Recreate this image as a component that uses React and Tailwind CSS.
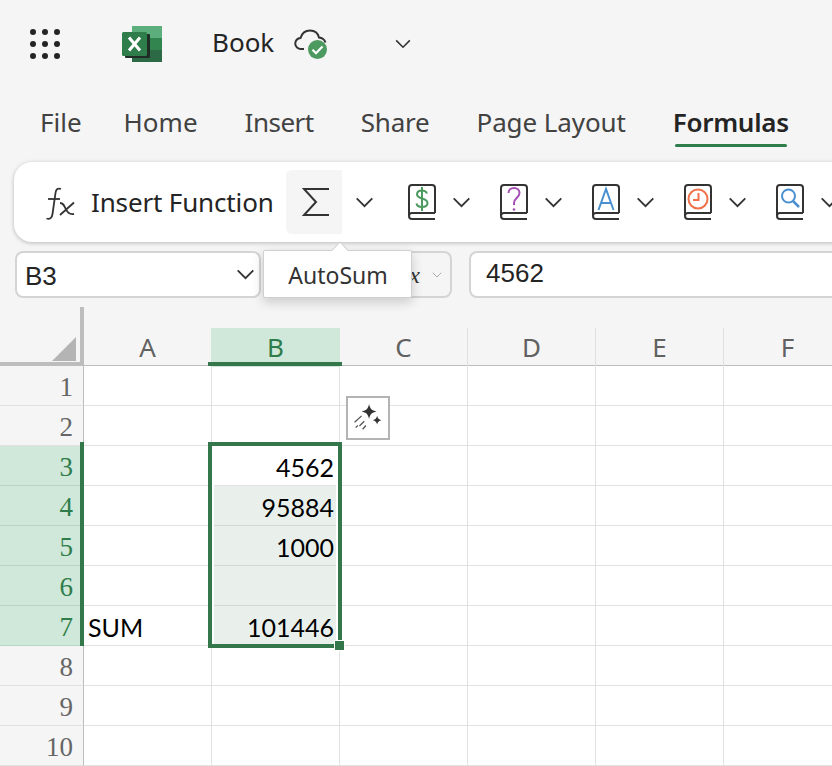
import React from "react";

const rows = [1, 2, 3, 4, 5, 6, 7, 8, 9, 10];
const cols = ["C", "D", "E", "F"];
const cells = { 3: "4562", 4: "95884", 5: "1000", 7: "101446" };

const Chevron = ({ className = "", color = "#333" }) => (
  <svg viewBox="0 0 20 12" className={className} fill="none" stroke={color} strokeWidth="2">
    <path d="M1.5 1.5 10 10l8.500-8.500" />
  </svg>
);

const AppGrid = () => (
  <svg viewBox="0 0 32 32" className="w-8 h-8 shrink-0" fill="#242424">
    {[4, 16, 28].map((y) =>
      [4, 16, 28].map((x) => <circle key={`${x}-${y}`} cx={x} cy={y} r="3" />)
    )}
  </svg>
);

const ExcelLogo = () => (
  <svg viewBox="0 0 40 36" className="w-10 h-9 shrink-0">
    <rect x="10" y="0" width="30" height="12" fill="#5cae7c" />
    <rect x="10" y="12" width="30" height="12" fill="#33854f" />
    <rect x="10" y="24" width="30" height="12" fill="#2b6a45" />
    <rect x="3" y="8" width="25" height="24" rx="1" fill="#1f2d26" />
    <rect x="0" y="6" width="25" height="24" rx="1.500" fill="#2f7d4b" />
    <path d="M7 11.500 18 24.500M18 11.500 7 24.500" stroke="#fff" strokeWidth="3" />
  </svg>
);

const CloudCheck = () => (
  <svg viewBox="0 0 34 32" className="w-[34px] h-8 shrink-0" fill="none">
    <path
      d="M10 20H7a5.500 5.500 0 0 1-.5-11C8 4 12 1.500 16 1.500c4.500 0 8 2.800 9 7 3 .3 5.500 2 6.500 5"
      stroke="#333"
      strokeWidth="2"
    />
    <circle cx="23.500" cy="20.500" r="9.500" fill="#4c9a5f" />
    <path d="m18.500 20.800 3.500 3.400 6.500-6.700" stroke="#fff" strokeWidth="2.200" />
  </svg>
);

const FxIcon = () => (
  <svg viewBox="0 0 32 34" className="w-8 h-[34px] shrink-0" fill="none" stroke="#333" strokeWidth="1.800">
    <path d="M17 2c-3-1.200-5 0-5.500 4L8.500 27c-.5 4-2.500 5.500-6 4.500" />
    <path d="M4 12h12" />
    <path d="M16 16c3 0 4 2 5.500 5.500S25 28 30 27M30 15.500 16 28" />
  </svg>
);

const Sigma = () => (
  <svg viewBox="0 0 28 30" className="w-7 h-[30px]" fill="none" stroke="#333" strokeWidth="2">
    <path d="M27 2H2l12 13L2 28h25" />
  </svg>
);

// book shaped ribbon icons share the same outline, only the glyph on the page changes
const Book = ({ children }) => (
  <svg viewBox="0 0 28 36" className="w-7 h-9 shrink-0" fill="none">
    <path
      d="M27 29H4a3 3 0 0 0-3 3M27 35H4a3 3 0 0 1-3-3V4a3 3 0 0 1 3-3h20a3 3 0 0 1 3 3v25"
      stroke="#333"
      strokeWidth="2"
    />
    {children}
  </svg>
);

const bookIcons = [
  <path
    key="d"
    d="M19 9.500C18 7 16 6.500 14 6.500c-3 0-5 1.700-5 4 0 5 10.500 3 10.500 8.500 0 2.500-2.300 4-5.500 4-2.500 0-5-1-5.500-3.500M14 3v24"
    stroke="#4c9a5f"
    strokeWidth="2"
  />,
  <g key="q">
    <path d="M8.500 9c0-3 2.500-5 5.500-5s5.500 2 5.500 5c0 4.500-5.500 5-5.500 10v2" stroke="#a64fb5" strokeWidth="2" />
    <circle cx="14" cy="25.500" r="1.300" fill="#a64fb5" />
  </g>,
  <path key="a" d="M6.500 26 14 5l7.500 21M9 19h10" stroke="#4a90d0" strokeWidth="2" />,
  <g key="c" stroke="#f0714a" strokeWidth="2">
    <circle cx="14" cy="15" r="9.500" />
    <path d="M14.500 9v7H9" />
  </g>,
  <g key="s" stroke="#4a90d0" strokeWidth="2">
    <circle cx="12.500" cy="12" r="6.500" />
    <path d="m17 17 6 6" strokeWidth="2.500" />
  </g>,
];

const Sparkle = () => (
  <svg viewBox="0 0 28 28" className="w-[30px] h-[30px]" fill="#333">
    <path d="M15 1c1 4.500 2.500 6 7 7-4.500 1-6 2.500-7 7-1-4.500-2.500-6-7-7 4.500-1 6-2.500 7-7Z" />
    <path d="M22.500 12c.6 2.500 1.500 3.400 4 4-2.500.6-3.400 1.500-4 4-.6-2.500-1.500-3.400-4-4 2.500-.6 3.400-1.500 4-4Z" />
    <path d="M8 12 1.500 18M10.500 17 6 21.500M4.500 21 2.500 23M12 21l-3 3.500" stroke="#555" strokeWidth="1.200" fill="none" />
  </svg>
);

const App = () => {
  return (
    <div className="w-[832px] h-[766px] overflow-hidden relative bg-[#f5f5f5] text-[#242424] font-['Noto_Sans',sans-serif]">
      {/* title bar */}
      <div className="h-[84px] flex items-center pl-[29px] pt-1">
        <AppGrid />
        <div className="ml-[61px]">
          <ExcelLogo />
        </div>
        <span className="ml-[50px] mt-[-4px] text-[26px]">Book</span>
        <div className="ml-[20px] mt-[2px]">
          <CloudCheck />
        </div>
        <Chevron className="ml-[67px] w-4 h-[10px]" />
      </div>

      {/* tabs */}
      <div className="h-[78px] flex gap-[47px] pl-[40px] text-[26px] text-[#424242]">
        <span className="mr-[-5px] mt-[20px] leading-9">File</span>
        <span className="mt-[20px] leading-9">Home</span>
        <span className="mt-[20px] leading-9 tracking-[-0.5px]">Insert</span>
        <span className="mt-[20px] leading-9 tracking-[-0.2px]">Share</span>
        <span className="mt-[20px] leading-9 tracking-[-0.1px]">Page Layout</span>
        <div className="mt-[20px] flex flex-col items-center">
          <span className="leading-9 font-semibold tracking-[-0.3px] text-[#242424]">Formulas</span>
          <div className="w-[112px] h-[3px] mt-[4px] rounded-full bg-[#2f7d4b]" />
        </div>
      </div>

      {/* ribbon */}
      <div className="ml-[14px] w-[900px] h-[80px] rounded-[18px] bg-white shadow-[0_1px_4px_rgba(0,0,0,0.25)] flex items-center">
        <div className="ml-[30px] mt-[3px]">
          <FxIcon />
        </div>
        <span className="ml-[15px] text-[26px] whitespace-nowrap tracking-[-0.15px]">Insert Function</span>
        <div className="ml-[12px] w-[56px] h-[64px] bg-[#f5f5f5] rounded-l-[6px] flex items-center justify-center pl-[5px]">
          <Sigma />
        </div>
        <Chevron className="ml-[13px] w-[19px] h-[11px]" />
        <div className="flex ml-[34px] gap-[64px]">
          {bookIcons.map((icon, i) => (
            <div key={i} className="flex items-center gap-[16px] w-[28px] overflow-visible">
              <Book>{icon}</Book>
              <Chevron className="w-[19px] h-[11px] shrink-0" />
            </div>
          ))}
        </div>
      </div>

      {/* name box and formula bar */}
      <div className="mt-[9px] h-[47px] flex pl-[15px]">
        <div className="w-[246px] shrink-0 bg-white border-2 border-[#d4d4d4] rounded-lg flex items-center justify-between pl-[8px] pr-[4px] text-[26px]">
          <span className="pt-[3px] font-['Liberation_Sans',sans-serif] text-[26px]">B3</span>
          <Chevron className="w-[19px] h-[11px]" />
        </div>
        <div className="ml-[4px] w-[187px] shrink-0 bg-[#f5f5f5] border-2 border-[#d4d4d4] rounded-lg flex items-center justify-end pr-[8px] gap-[12px]">
          <span className="text-[24px] italic font-['Liberation_Serif',serif] text-[#333]">x</span>
          <Chevron className="w-[10px] h-[6px]" color="#aaa" />
        </div>
        <div className="ml-[17px] w-[400px] shrink-0 bg-white border-2 border-[#d4d4d4] rounded-lg flex items-center pl-[15px] pb-[2px] text-[26px] font-['Liberation_Sans',sans-serif]">
          4562
        </div>
      </div>

      {/* sheet */}
      <div className="relative mt-[9px]">
        <div className="h-[59px] relative grid grid-cols-[84px_127px_129px_128px_128px_128px_128px] border-b border-[#bdbdbd]">
          <div className="flex items-end justify-end pr-[8px] pb-[6px]">
            <div className="w-6 h-6 bg-[#b4b4b4] [clip-path:polygon(100%_0,100%_100%,0_100%)]" />
          </div>
          <div className="mt-[21px] flex items-center justify-center text-[26px] text-[#616161]">A</div>
          <div className="mt-[21px] flex items-center justify-center text-[26px] text-[#2f7d4b] bg-[#d0e8d9]">B</div>
          {cols.map((c) => (
            <div key={c} className="mt-[21px] flex items-center justify-center text-[26px] text-[#616161] border-r border-[#e1e1e1]">
              {c}
            </div>
          ))}
        </div>
        <div className="absolute left-[80px] top-0 w-[4px] h-[59px] bg-[#bdbdbd]" />
        <div className="absolute left-0 top-[55px] w-[84px] h-[3px] bg-[#bdbdbd]" />
        <div className="absolute left-[208px] top-[55px] w-[134px] h-[4px] bg-[#33774a]" />

        <div className="font-['Lato',sans-serif] text-[25px] leading-none text-black">
          {rows.map((r) => {
            const active = r >= 3 && r <= 7;
            return (
              <div key={r} className="h-[40px] grid grid-rows-[40px] grid-cols-[84px_128px_128px_128px_128px_128px_128px]">
                <div
                  className={`flex items-center justify-end pt-[4px] pr-[10px] border-r border-b font-['Liberation_Serif',serif] text-[27px] ${
                    active
                      ? "bg-[#d0e8d9] text-[#2f7d4b] border-b-[#b5d6c1] border-r-[#33774a]"
                      : "bg-[#f5f5f5] text-[#666] border-b-[#e1e1e1] border-r-[#bdbdbd]"
                  }`}
                >
                  {r}
                </div>
                <div className="flex items-center pt-[4px] pl-[4px] bg-white border-r border-b border-[#e1e1e1]">{r === 7 ? "SUM" : ""}</div>
                <div
                  className={`flex items-center justify-end pt-[4px] pr-[5px] border-r border-b ${
                    r >= 4 && r <= 7 ? "bg-[#e9f0ec] border-[#d6d6d6]" : "bg-white border-[#e1e1e1]"
                  }`}
                >
                  {cells[r]}
                </div>
                {cols.map((c) => (
                  <div key={c} className="bg-white border-r border-b border-[#e1e1e1]" />
                ))}
              </div>
            );
          })}
        </div>

        {/* selection overlays */}
        <div className="absolute left-[80px] top-[135px] w-[4px] h-[204px] bg-[#33774a]" />
        <div className="absolute left-[208px] top-[135px] w-[134px] h-[206px] border-[4px] border-[#33774a]">
          <div className="w-full h-full border-2 border-white border-t-0 border-b-0" />
        </div>
        <div className="absolute left-[335px] top-[334px] w-[9px] h-[9px] bg-[#33774a] outline outline-1 outline-white" />
        <div className="absolute left-[346px] top-[89px] w-[44px] h-[44px] bg-white border-2 border-[#b4b4b4] flex items-center justify-center">
          <Sparkle />
        </div>
      </div>

      {/* tooltip */}
      <div className="absolute left-[263px] top-[250px] w-[149px] h-[48px] bg-white border border-[#d0d0d0] rounded-[2px] shadow-[0_4px_12px_rgba(0,0,0,0.18)] flex items-center justify-center pl-[1px] pt-[2px] text-[23px] text-[#333]">
        AutoSum
        <div className="absolute left-[70px] top-[-7px] w-3 h-3 bg-white border-l border-t border-[#d0d0d0] rotate-45" />
      </div>
    </div>
  );
};

export default App;
